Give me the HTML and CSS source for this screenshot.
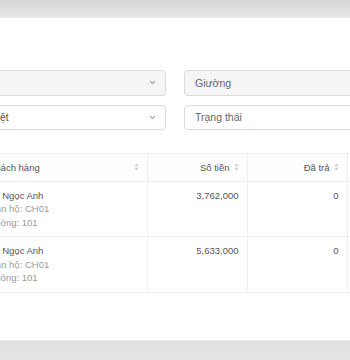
FILE: index.html
```html
<!DOCTYPE html>
<html lang="vi">
<head>
<meta charset="utf-8">
<link rel="stylesheet" href="styles.css">
</head>
<body>
<div class="band band-top"></div>
<main class="card">
  <section class="filters">
    <div class="field field-disabled"><span class="value"></span><span class="chev"><svg width="7" height="5" viewBox="0 0 7 5"><path d="M1 1.2 L3.5 3.6 L6 1.2" fill="none" stroke="#9a9a9a" stroke-width="1.1"/></svg></span></div>
    <div class="field field-disabled"><span class="value muted">Giường</span></div>
    <div class="field"><span class="value">Tiếng Việt</span><span class="chev"><svg width="7" height="5" viewBox="0 0 7 5"><path d="M1 1.2 L3.5 3.6 L6 1.2" fill="none" stroke="#9a9a9a" stroke-width="1.1"/></svg></span></div>
    <div class="field"><span class="value muted">Trạng thái</span></div>
  </section>
  <table class="grid">
    <colgroup><col class="c1"><col class="c2"><col class="c3"><col class="c4"></colgroup>
    <thead>
      <tr>
        <th><div class="th left"><span class="title">Khách hàng</span><svg class="sort" width="5" height="8" viewBox="0 0 5 8"><path d="M2.5 0.5 L4.6 3.2 L0.4 3.2 Z M2.5 7.5 L4.6 4.8 L0.4 4.8 Z" fill="#cdcdcd"/></svg></div></th>
        <th><div class="th right"><span class="title">Số tiền</span><svg class="sort" width="5" height="8" viewBox="0 0 5 8"><path d="M2.5 0.5 L4.6 3.2 L0.4 3.2 Z M2.5 7.5 L4.6 4.8 L0.4 4.8 Z" fill="#cdcdcd"/></svg></div></th>
        <th><div class="th right"><span class="title">Đã trả</span><svg class="sort" width="5" height="8" viewBox="0 0 5 8"><path d="M2.5 0.5 L4.6 3.2 L0.4 3.2 Z M2.5 7.5 L4.6 4.8 L0.4 4.8 Z" fill="#cdcdcd"/></svg></div></th>
        <th></th>
      </tr>
    </thead>
    <tbody>
      <tr>
        <td><div class="name">Lê Ngọc Anh</div><div class="sub">Căn hộ: CH01</div><div class="sub">Phòng: 101</div></td>
        <td class="num">3,762,000</td>
        <td class="num">0</td>
        <td></td>
      </tr>
      <tr>
        <td><div class="name">Lê Ngọc Anh</div><div class="sub">Căn hộ: CH01</div><div class="sub">Phòng: 101</div></td>
        <td class="num">5,633,000</td>
        <td class="num">0</td>
        <td></td>
      </tr>
    </tbody>
  </table>
</main>
<div class="band band-bottom"></div>
</body>
</html>
```
FILE: styles.css
```css
html, body {
  margin: 0;
  padding: 0;
  width: 350px;
  height: 360px;
  overflow: hidden;
  background: #e3e3e3;
  font-family: "Liberation Sans", Arial, sans-serif;
}

.band {
  width: 100%;
}

.band-top {
  height: 18px;
  background: linear-gradient(#d6d6d6, #e4e4e4 70%, #e6e6e6);
  box-shadow: inset 0 -1px 0 #ececec;
}

.band-bottom {
  height: 19px;
  background: linear-gradient(#e0e0e0, #e5e5e5);
  border-top: 1px solid #e9e9e9;
}

.card {
  height: 322px;
  background: #ffffff;
  overflow: hidden;
  padding-top: 52px;
  box-sizing: border-box;
}

.filters {
  display: grid;
  grid-template-columns: 215px 215px;
  column-gap: 18px;
  row-gap: 9px;
  margin-left: -49px;
}

.field {
  height: 25px;
  box-sizing: border-box;
  border: 1px solid #dadada;
  border-radius: 4px;
  background: #ffffff;
  display: flex;
  align-items: center;
  padding: 0 9px 0 10px;
  font-size: 10.5px;
  color: #555;
}

.field-disabled {
  background: #f5f5f5;
  height: 25.5px;
}

.value {
  flex: 1;
  white-space: nowrap;
}

.muted {
  color: #666;
}

.chev {
  display: flex;
  align-items: center;
}

.grid {
  margin-top: 23px;
  margin-left: -19px;
  border-collapse: collapse;
  table-layout: fixed;
  width: 467px;
  font-size: 9.5px;
  color: #555;
}

.c1 { width: 166px; }
.c2 { width: 100px; }
.c3 { width: 100px; }
.c4 { width: 101px; }

.grid th {
  font-weight: normal;
  padding: 7px 8px;
  line-height: 13px;
  height: 13px;
  border-top: 1px solid #f0f0f0;
  border-bottom: 1px solid #efefef;
  border-right: 1px solid #f0f0f0;
  background: #fdfdfd;
  color: #555;
}

.th {
  display: flex;
  align-items: center;
  gap: 4px;
}

.th .title {
  flex: 1;
  white-space: nowrap;
}

.th.right .title {
  text-align: right;
}

.th.left .title {
  text-align: left;
}

.sort {
  display: block;
}

.grid td {
  padding: 7px 8px;
  line-height: 13.5px;
  vertical-align: top;
  border-bottom: 1px solid #f0f0f0;
  border-right: 1px solid #f0f0f0;
  white-space: nowrap;
}

.name {
  color: #555;
}

.sub {
  color: #9a9a9a;
}

.num {
  text-align: right;
  color: #555;
}
```
